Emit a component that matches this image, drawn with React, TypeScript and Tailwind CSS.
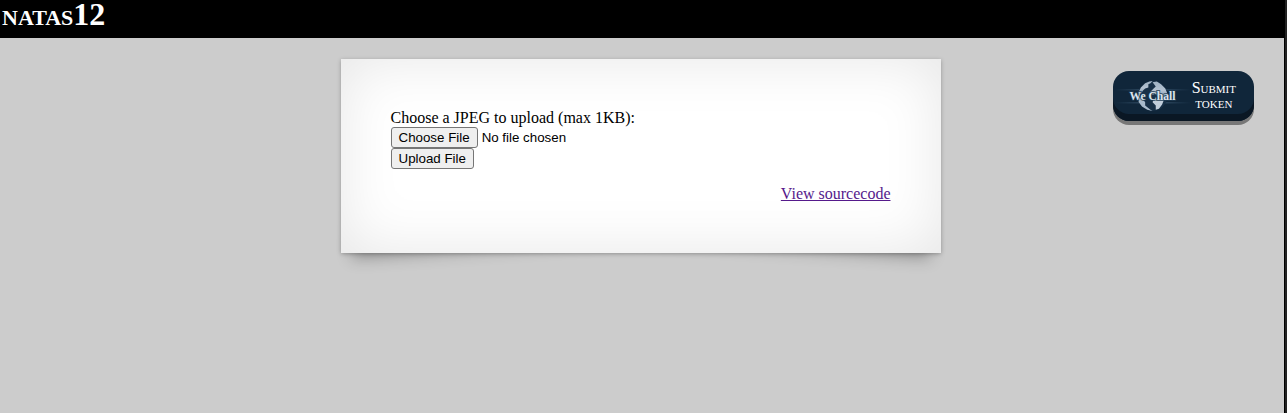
const serif = "font-['Liberation_Serif',serif]";
const control =
  "box-border h-[21px] rounded-[3px] border border-[#767676] bg-[#efefef] px-[7px] text-[13.333px] leading-[19px] text-black font-['Liberation_Sans',sans-serif]";

function Globe() {
  return (
    <svg className="block h-[34px] w-[76px] shrink-0" viewBox="0 0 76 34">
      <defs>
        <linearGradient id="beam" x1="0" x2="1">
          <stop offset="0" stopColor="#4a6d8c" stopOpacity="0" />
          <stop offset=".5" stopColor="#5c7d99" stopOpacity=".55" />
          <stop offset="1" stopColor="#4a6d8c" stopOpacity="0" />
        </linearGradient>
        <linearGradient id="land" x1="0" y1="0" x2="0" y2="1">
          <stop offset="0" stopColor="#9fb1c2" />
          <stop offset=".5" stopColor="#b4c2d1" />
          <stop offset="1" stopColor="#7d92a6" />
        </linearGradient>
      </defs>
      <rect x="0" y="10" width="76" height="1.5" fill="url(#beam)" />
      <rect x="0" y="23" width="76" height="1.5" fill="url(#beam)" />
      <g transform="translate(-2.7 -1.1) scale(1.06)">
        <circle cx="38" cy="17" r="14" fill="#183047" />
        <path d="M25 13 27 9 31 5 35 3.5 38 3 36 5 34 6 34 9 31 10 29 12 27 15 24 16Z" fill="url(#land)" />
        <path d="M38 4 42 3.5 46 6 50 10 52 15 51 20 46 20 43 18 41 15 38 16 36 13 39 10 41 8Z" fill="url(#land)" />
        <path d="M39 20 44 20 49 20 47 25 44 29 41 30 41 26 38 23Z" fill="#c1cedb" />
        <path d="M24 18 28 19 31 23 31 26 36 30 38 31.2 33 30 28 27 25 23Z" fill="#a9bacb" />
      </g>
      <text
        x="14.5"
        y="20.5"
        textLength="46"
        lengthAdjust="spacingAndGlyphs"
        fontFamily="Liberation Serif, serif"
        fontSize="12"
        fontWeight="700"
        fill="#dbe4ec"
        stroke="#203b52"
        strokeWidth="1.8"
        strokeOpacity=".8"
        paintOrder="stroke"
      >
        We Chall
      </text>
    </svg>
  );
}

export default function App() {
  return (
    <div className={`flex h-[413px] w-full overflow-hidden bg-[#cccccc] text-[16px] text-black ${serif}`}>
      <div className="flex min-w-0 flex-1 flex-col">
        <header className="h-[38px] bg-black pl-[2px]">
          <h1 className="text-[32px] leading-[29px] font-bold text-white [font-variant:small-caps]">natas12</h1>
        </header>
        <div className="flex items-start pt-[21px]">
          <main className="relative isolate ml-[340.5px] h-[194px] w-[600px] shrink-0">
            <div className="absolute bottom-[13px] left-[16px] -z-10 h-[100px] w-[300px] shadow-[0_8px_16px_rgba(0,0,0,0.3)] [transform:skew(-8deg)_rotate(-4deg)]" />
            <div className="absolute right-[16px] bottom-[13px] -z-10 h-[100px] w-[300px] shadow-[0_8px_16px_rgba(0,0,0,0.3)] [transform:skew(8deg)_rotate(4deg)]" />
            <div className="h-full bg-white px-[50px] pt-[50px] shadow-[0_1px_4px_rgba(0,0,0,0.27),inset_0_0_60px_rgba(0,0,0,0.1)]">
              <p className="h-[18px] leading-[18px]">Choose a JPEG to upload (max 1KB):</p>
              <div className="flex h-[21px] items-center gap-[4px]">
                <button className={control}>Choose File</button>
                <span className="text-[13.333px] leading-[15px] font-['Liberation_Sans',sans-serif]">No file chosen</span>
              </div>
              <button className={`block ${control}`}>Upload File</button>
              <div className="mt-[16px] text-right leading-[18px]">
                <a href="#" className="text-[#551a8b] underline">View sourcecode</a>
              </div>
            </div>
          </main>
          <button className="mt-[12px] ml-[172.8px] flex h-[50px] w-[141px] items-center rounded-[16px] bg-[#10263a] pl-[2px] shadow-[inset_0_-7px_0_#0a1724,0_4px_0_#777777]">
            <Globe />
            <span className="mb-[3px] w-[45px] text-center text-[16px] leading-[15px] text-white [font-variant:small-caps]">Submit token</span>
          </button>
        </div>
      </div>
      <div className="w-[3px] shrink-0 border-l border-black bg-[#222222]" />
    </div>
  );
}
